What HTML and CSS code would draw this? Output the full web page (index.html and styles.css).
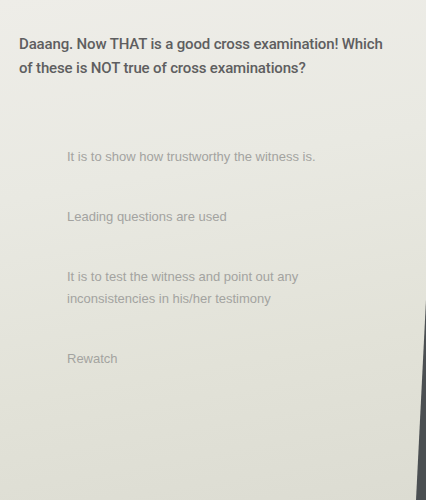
FILE: index.html
```html
<!DOCTYPE html>
<html lang="en">
<head>
<meta charset="utf-8">
<title>Cross examination quiz</title>
<link rel="stylesheet" href="styles.css">
</head>
<body>
<main class="quiz">
  <h1 class="question">Daaang. Now THAT is a good cross examination! Which of these is NOT true of cross examinations?</h1>
  <ul class="options">
    <li class="option">It is to show how trustworthy the witness is.</li>
    <li class="option">Leading questions are used</li>
    <li class="option">It is to test the witness and point out any inconsistencies in his/her testimony</li>
    <li class="option">Rewatch</li>
  </ul>
</main>
<div class="edge"></div>
</body>
</html>
```
FILE: styles.css
```css
html, body {
  margin: 0;
  height: 100%;
}
body {
  width: 426px;
  height: 500px;
  overflow: hidden;
  position: relative;
  background: linear-gradient(170deg, #eeede8 0%, #e9e9e2 35%, #e2e2d8 70%, #dcdcd2 100%);
  font-family: "Liberation Sans", Arial, sans-serif;
}
.quiz {
  padding: 32px 20px 0 19px;
}
.question {
  margin: 0;
  font-family: Roboto, "Liberation Sans", Arial, sans-serif;
  font-size: 15px;
  line-height: 24px;
  font-weight: 500;
  letter-spacing: -0.15px;
  color: #5e5e60;
  width: 375px;
}
.options {
  list-style: none;
  margin: 66px 0 0 0;
  padding: 0 0 0 48px;
  display: flex;
  flex-direction: column;
  gap: 38px;
}
.option {
  font-size: 13px;
  line-height: 22px;
  color: #a3a3a0;
  width: 250px;
}
.edge {
  position: absolute;
  right: 0;
  top: 300px;
  width: 10px;
  height: 200px;
  background: #4b4f52;
  clip-path: polygon(100% 0, 100% 100%, 0 100%);
}
```
